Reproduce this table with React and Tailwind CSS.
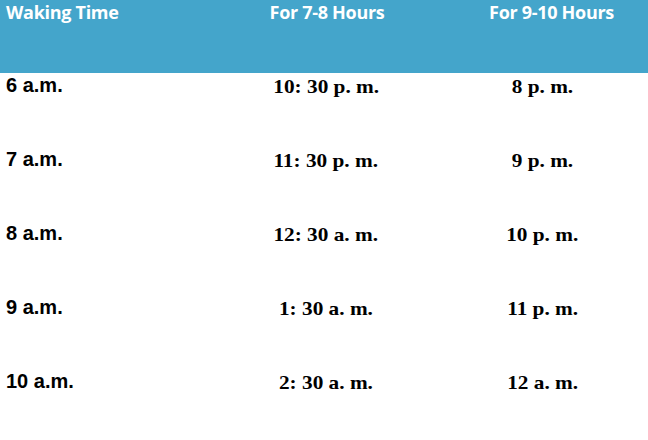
const rows = [
  ["6 a.m.", "10: 30 p. m.", "8 p. m."],
  ["7 a.m.", "11: 30 p. m.", "9 p. m."],
  ["8 a.m.", "12: 30 a. m.", "10 p. m."],
  ["9 a.m.", "1: 30 a. m.", "11 p. m."],
  ["10 a.m.", "2: 30 a. m.", "12 a. m."],
];

export default function App() {
  return (
    <div className="w-[648px] h-[440px] bg-white overflow-hidden">
      <div className="h-[73px] bg-[#44a5cb] grid grid-cols-[215px_222px_211px] text-white font-bold text-[18px] leading-[24px] font-['Open_Sans',sans-serif] tracking-[-0.3px]">
        <div className="pl-[6px]">Waking Time</div>
        <div className="text-center pl-[2px]">For 7-8 Hours</div>
        <div className="text-center pl-[18px]">For 9-10 Hours</div>
      </div>
      {rows.map((r) => (
        <div key={r[0]} className="h-[74px] grid grid-cols-[215px_222px_211px] items-start text-black">
          <div className="pl-[6px] font-bold text-[20px] leading-[24px] font-['Liberation_Sans',Arial,sans-serif]">{r[0]}</div>
          <div className="text-center font-bold text-[19px] leading-[27px] font-['Liberation_Serif','Times_New_Roman',serif]">
            <span className="inline-block scale-x-[1.12]">{r[1]}</span>
          </div>
          <div className="text-center font-bold text-[19px] leading-[27px] font-['Liberation_Serif','Times_New_Roman',serif]">
            <span className="inline-block scale-x-[1.12]">{r[2]}</span>
          </div>
        </div>
      ))}
    </div>
  );
}
